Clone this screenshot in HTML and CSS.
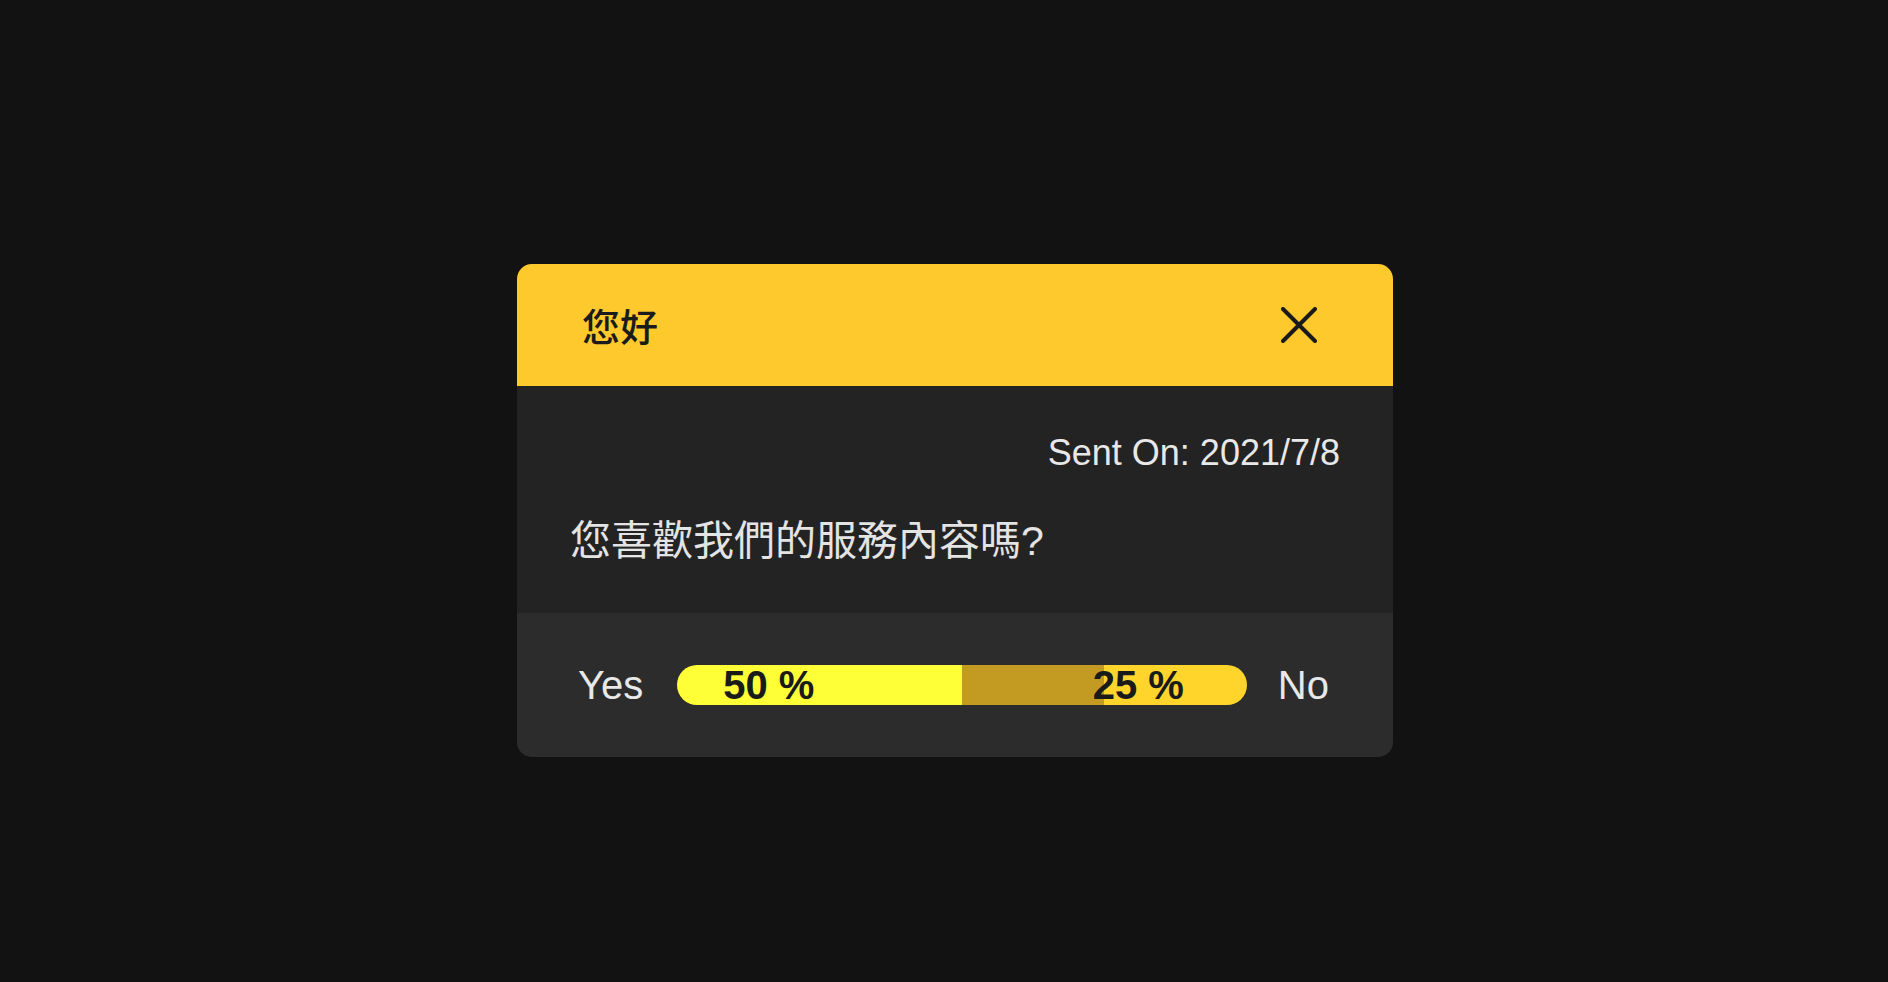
FILE: index.html
```html
<!DOCTYPE html>
<html lang="zh-Hant">
<head>
<meta charset="utf-8">
<title>Poll</title>
<link rel="stylesheet" href="styles.css">
</head>
<body>
<div class="stage">
  <section class="card">
    <header class="card-head">
      <h1 class="title">您好</h1>
      <button class="close" aria-label="close">
        <svg width="36" height="36" viewBox="0 0 36 36"><path d="M2 2 L34 34 M34 2 L2 34" stroke="#1a1a1a" stroke-width="4" stroke-linecap="round" fill="none"/></svg>
      </button>
    </header>
    <div class="card-body">
      <div class="sent">Sent On: 2021/7/8</div>
      <p class="question">您喜歡我們的服務內容嗎?</p>
    </div>
    <footer class="card-foot">
      <span class="opt opt-yes">Yes</span>
      <div class="bar">
        <div class="seg seg-yes" style="width:50%"></div>
        <div class="seg seg-mid" style="width:25%"></div>
        <div class="seg seg-no" style="width:25%"></div>
        <div class="bar-labels">
          <span class="bar-label">50 %</span>
          <span class="bar-label">25 %</span>
        </div>
      </div>
      <span class="opt">No</span>
    </footer>
  </section>
</div>
</body>
</html>
```

FILE: styles.css
```css
html, body {
  margin: 0;
  padding: 0;
  background: #121212;
}
body {
  font-family: "Liberation Sans", Arial, "Noto Sans CJK TC", sans-serif;
}
.stage {
  display: flex;
  align-items: flex-start;
  padding: 264px 0 0 517px;
  min-height: 982px;
  box-sizing: border-box;
}
.card {
  width: 876px;
  border-radius: 15px;
  overflow: hidden;
  background: #232323;
}
.card-head {
  height: 122px;
  background: #fec92c;
  display: flex;
  align-items: center;
  justify-content: space-between;
  padding: 0 76px 0 65px;
}
.title {
  margin: 0;
  font-family: "Noto Sans CJK TC", sans-serif;
  font-weight: 500;
  font-size: 38px;
  line-height: 1.2;
  color: #1b1b1b;
}
.close {
  border: 0;
  background: none;
  padding: 0;
  width: 36px;
  height: 36px;
  display: flex;
  cursor: pointer;
}
.card-body {
  padding: 46px 53px 50px 53px;
  color: #e8e8e8;
}
.sent {
  text-align: right;
  font-size: 36px;
  line-height: 1.15;
}
.question {
  margin: 47px 0 0;
  font-family: "Liberation Sans", Arial, "Noto Sans CJK TC", sans-serif;
  font-size: 41px;
  line-height: 43px;
  color: #e4e4e4;
}
.card-foot {
  height: 144px;
  background: #2c2c2c;
  display: flex;
  align-items: center;
  padding: 0 64px 0 61px;
  gap: 31px;
}
.opt {
  font-size: 40px;
  color: #e8e8e8;
}
.opt-yes {
  margin-right: 3px;
}
.bar {
  flex: 1;
  height: 40px;
  display: flex;
  position: relative;
}
.seg { height: 100%; }
.seg-yes { background: #ffff38; border-radius: 20px 0 0 20px; }
.seg-mid { background: #c49b22; }
.seg-no { background: #ffd52c; border-radius: 0 20px 20px 0; }
.bar-labels {
  position: absolute;
  inset: 0;
  display: flex;
  align-items: center;
  justify-content: space-between;
  padding: 0 63px 0 46px;
}
.bar-label {
  font-weight: 700;
  font-size: 40px;
  line-height: 40px;
  color: #1a1a1a;
}
```
